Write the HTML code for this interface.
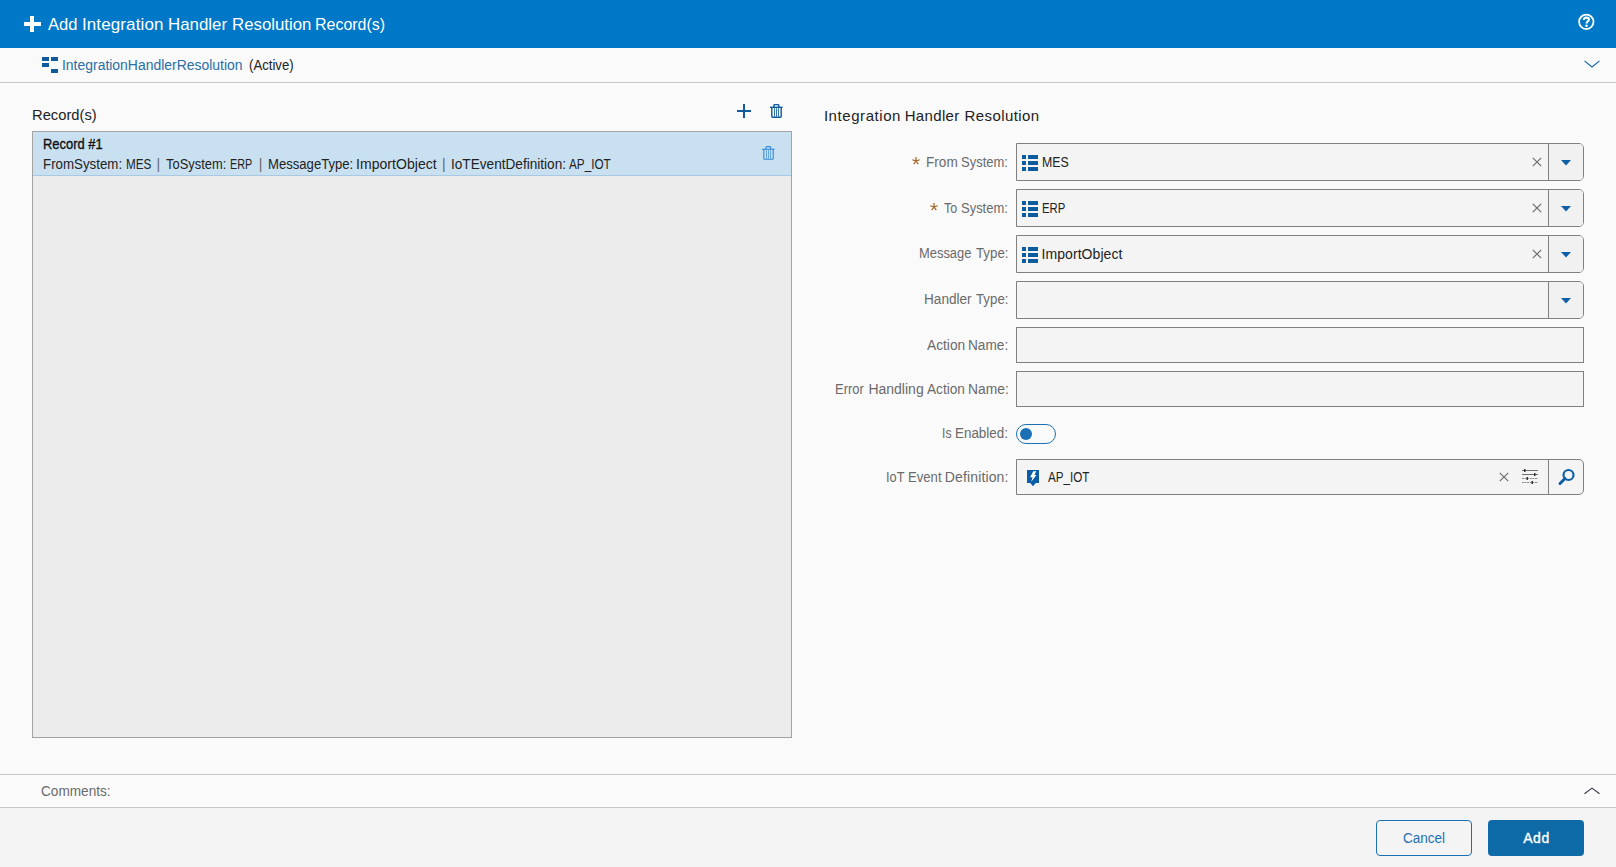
<!DOCTYPE html>
<html><head><meta charset="utf-8"><style>
html,body{margin:0;padding:0;width:1616px;height:867px;overflow:hidden;background:#fafafa;font-family:"Liberation Sans", sans-serif;}
.t{position:absolute;line-height:1;white-space:nowrap;}
</style></head><body>
<div style="position:absolute;left:0px;top:0px;width:1616px;height:48px;box-sizing:border-box;background:#0078c8"></div>
<div style="position:absolute;left:24px;top:22.3px;width:16.6px;height:3.4px;box-sizing:border-box;background:#fff"></div>
<div style="position:absolute;left:30.3px;top:16px;width:3.4px;height:16px;box-sizing:border-box;background:#fff"></div>
<div class="t" style="left:48.30px;top:16px;font-size:17px;color:#fff;font-weight:normal;letter-spacing:0.000px;transform:scaleX(0.9734);transform-origin:0 0;">Add</div>
<div class="t" style="left:81.90px;top:16px;font-size:17px;color:#fff;font-weight:normal;letter-spacing:0.122px;">Integration</div>
<div class="t" style="left:168.21px;top:16px;font-size:17px;color:#fff;font-weight:normal;letter-spacing:0.000px;transform:scaleX(0.9920);transform-origin:0 0;">Handler</div>
<div class="t" style="left:231.81px;top:16px;font-size:17px;color:#fff;font-weight:normal;letter-spacing:0.000px;transform:scaleX(0.9889);transform-origin:0 0;">Resolution</div>
<div class="t" style="left:315.36px;top:16px;font-size:17px;color:#fff;font-weight:normal;letter-spacing:0.000px;transform:scaleX(0.9388);transform-origin:0 0;">Record(s)</div>
<svg style="position:absolute;left:1577px;top:13px" width="18" height="18" viewBox="0 0 18 18"><circle cx="9.3" cy="8.85" r="7.2" fill="none" stroke="#fff" stroke-width="1.8"/><path d="M6.8 6.9 C6.8 5.4 7.9 4.7 9.3 4.7 C10.8 4.7 11.9 5.5 11.9 6.7 C11.9 8.2 9.6 8.4 9.6 10.4" fill="none" stroke="#fff" stroke-width="2.2"/><circle cx="9.5" cy="12.8" r="1.35" fill="#fff"/></svg>
<div style="position:absolute;left:0px;top:82px;width:1616px;height:1px;box-sizing:border-box;background:#c8c8c8"></div>
<svg style="position:absolute;left:42px;top:57px" width="16" height="16" viewBox="0 0 16 16"><rect x="0" y="0" width="7" height="4" fill="#0e5a9c"/><rect x="9" y="0" width="7" height="4" fill="#0e5a9c"/><rect x="0" y="6" width="7" height="4" fill="#0e5a9c"/><rect x="9" y="12" width="7" height="4" fill="#0e5a9c"/></svg>
<div class="t" style="left:61.70px;top:58px;font-size:14px;color:#2a6ea6;font-weight:normal;letter-spacing:0.000px;transform:scaleX(0.9953);transform-origin:0 0;">IntegrationHandlerResolution</div>
<div class="t" style="left:249.00px;top:58px;font-size:14px;color:#222;font-weight:normal;letter-spacing:0.000px;transform:scaleX(0.9404);transform-origin:0 0;">(Active)</div>
<svg style="position:absolute;left:1584px;top:60px" width="16" height="9" viewBox="0 0 16 9"><path d="M0.5 0.9 L8 6.9 L15.5 0.9" fill="none" stroke="#1260a6" stroke-width="1.15"/></svg>
<div class="t" style="left:32.02px;top:107px;font-size:15px;color:#222;font-weight:normal;letter-spacing:0.000px;transform:scaleX(0.9838);transform-origin:0 0;">Record(s)</div>
<div style="position:absolute;left:737px;top:110px;width:14px;height:2px;box-sizing:border-box;background:#0e5a9c"></div>
<div style="position:absolute;left:743px;top:104px;width:2px;height:14px;box-sizing:border-box;background:#0e5a9c"></div>
<svg style="position:absolute;left:770px;top:104px" width="13" height="14" viewBox="0 0 13 14"><g fill="none" stroke="#0e5a9c" stroke-width="1.4"><path d="M0 3.3 H12.6"/><path d="M3.9 3.1 V1.6 Q3.9 0.6 4.9 0.6 H7.8 Q8.8 0.6 8.8 1.6 V3.1"/><path d="M1.8 3.6 V12.6 Q1.8 13.3 2.5 13.3 H10.5 Q11.2 13.3 11.2 12.6 V3.6"/></g><path d="M4.5 4.2 V12.6 M6.5 4.2 V12.6 M8.5 4.2 V12.6" stroke="#0e5a9c" stroke-width="0.84"/></svg>
<div style="position:absolute;left:32px;top:131px;width:760px;height:607px;box-sizing:border-box;background:#ececec;border:1px solid #a3a3a3"></div>
<div style="position:absolute;left:33px;top:132px;width:758px;height:44px;box-sizing:border-box;background:#c9e0f1;border-bottom:1px solid #a9c9e2"></div>
<div class="t" style="left:42.98px;top:137px;font-size:14px;color:#111;font-weight:normal;letter-spacing:0.000px;transform:scaleX(0.9231);transform-origin:0 0;-webkit-text-stroke:0.35px #111;">Record #1</div>
<div class="t" style="left:42.75px;top:157px;font-size:14px;color:#222;font-weight:normal;letter-spacing:0.000px;transform:scaleX(0.9504);transform-origin:0 0;">FromSystem:</div>
<div class="t" style="left:125.77px;top:157px;font-size:14px;color:#222;font-weight:normal;letter-spacing:0.000px;transform:scaleX(0.8345);transform-origin:0 0;">MES</div>
<div class="t" style="left:156.60px;top:157px;font-size:14px;color:#666;font-weight:normal;letter-spacing:0.000px;">|</div>
<div class="t" style="left:166.20px;top:157px;font-size:14px;color:#222;font-weight:normal;letter-spacing:0.000px;transform:scaleX(0.9215);transform-origin:0 0;">ToSystem:</div>
<div class="t" style="left:230.43px;top:157px;font-size:14px;color:#222;font-weight:normal;letter-spacing:0.000px;transform:scaleX(0.7724);transform-origin:0 0;">ERP</div>
<div class="t" style="left:258.80px;top:157px;font-size:14px;color:#666;font-weight:normal;letter-spacing:0.000px;">|</div>
<div class="t" style="left:267.56px;top:157px;font-size:14px;color:#222;font-weight:normal;letter-spacing:0.000px;transform:scaleX(0.9365);transform-origin:0 0;">MessageType:</div>
<div class="t" style="left:356.00px;top:157px;font-size:14px;color:#222;font-weight:normal;letter-spacing:0.050px;">ImportObject</div>
<div class="t" style="left:442.00px;top:157px;font-size:14px;color:#666;font-weight:normal;letter-spacing:0.000px;">|</div>
<div class="t" style="left:450.83px;top:157px;font-size:14px;color:#222;font-weight:normal;letter-spacing:0.000px;transform:scaleX(0.9726);transform-origin:0 0;">IoTEventDefinition:</div>
<div class="t" style="left:569.30px;top:157px;font-size:14px;color:#222;font-weight:normal;letter-spacing:0.000px;transform:scaleX(0.8380);transform-origin:0 0;">AP_IOT</div>
<svg style="position:absolute;left:761.8px;top:145.8px" width="13" height="14" viewBox="0 0 13 14"><g fill="none" stroke="#3088d6" stroke-width="1.1"><path d="M0 3.3 H12.6"/><path d="M3.9 3.1 V1.6 Q3.9 0.6 4.9 0.6 H7.8 Q8.8 0.6 8.8 1.6 V3.1"/><path d="M1.8 3.6 V12.6 Q1.8 13.3 2.5 13.3 H10.5 Q11.2 13.3 11.2 12.6 V3.6"/></g><path d="M4.5 4.2 V12.6 M6.5 4.2 V12.6 M8.5 4.2 V12.6" stroke="#3088d6" stroke-width="0.66"/></svg>
<div class="t" style="left:823.90px;top:108px;font-size:15px;color:#222;font-weight:normal;letter-spacing:0.566px;">Integration</div>
<div class="t" style="left:904.70px;top:108px;font-size:15px;color:#222;font-weight:normal;letter-spacing:0.344px;">Handler</div>
<div class="t" style="left:964.50px;top:108px;font-size:15px;color:#222;font-weight:normal;letter-spacing:0.407px;">Resolution</div>
<div class="t" style="left:925.53px;top:155px;font-size:14px;color:#6a6a6a;font-weight:normal;letter-spacing:0.000px;transform:scaleX(0.9710);transform-origin:0 0;">From</div>
<div class="t" style="left:961.20px;top:155px;font-size:14px;color:#6a6a6a;font-weight:normal;letter-spacing:0.000px;transform:scaleX(0.9280);transform-origin:0 0;">System:</div>
<div style="position:absolute;left:1016px;top:143px;width:568px;height:38px;box-sizing:border-box;background:#f4f4f4;border:1px solid #808080;border-radius:0 5px 5px 0"></div>
<div style="position:absolute;left:1548px;top:143px;width:1px;height:38px;box-sizing:border-box;background:#808080"></div>
<div style="position:absolute;left:1549px;top:144px;width:34px;height:36px;box-sizing:border-box;background:#f1f1f1;border-radius:0 4px 4px 0"></div>
<svg style="position:absolute;left:1561px;top:160px" width="10" height="6" viewBox="0 0 10 6"><path d="M0 0 H10 L5 5.5 Z" fill="#0e5fa8"/></svg>
<svg style="position:absolute;left:1531.5px;top:157.4px" width="10" height="10" viewBox="0 0 10 10"><path d="M0.8 0.8 L9.2 9.2 M9.2 0.8 L0.8 9.2" stroke="#6a6a6a" stroke-width="1.15"/></svg>
<svg style="position:absolute;left:1022px;top:155px" width="16" height="16" viewBox="0 0 16 16"><g fill="#0a5c9f"><rect x="0" y="0" width="4" height="4"/><rect x="6" y="0" width="10" height="4"/><rect x="0" y="6" width="4" height="4"/><rect x="6" y="6" width="10" height="4"/><rect x="0" y="12" width="4" height="4"/><rect x="6" y="12" width="10" height="4"/></g></svg>
<div class="t" style="left:1041.82px;top:155px;font-size:14px;color:#222;font-weight:normal;letter-spacing:0.000px;transform:scaleX(0.8793);transform-origin:0 0;">MES</div>
<div class="t" style="left:943.60px;top:201px;font-size:14px;color:#6a6a6a;font-weight:normal;letter-spacing:0.000px;transform:scaleX(0.8933);transform-origin:0 0;">To</div>
<div class="t" style="left:961.40px;top:201px;font-size:14px;color:#6a6a6a;font-weight:normal;letter-spacing:0.000px;transform:scaleX(0.9260);transform-origin:0 0;">System:</div>
<div style="position:absolute;left:1016px;top:189px;width:568px;height:38px;box-sizing:border-box;background:#f4f4f4;border:1px solid #808080;border-radius:0 5px 5px 0"></div>
<div style="position:absolute;left:1548px;top:189px;width:1px;height:38px;box-sizing:border-box;background:#808080"></div>
<div style="position:absolute;left:1549px;top:190px;width:34px;height:36px;box-sizing:border-box;background:#f1f1f1;border-radius:0 4px 4px 0"></div>
<svg style="position:absolute;left:1561px;top:206px" width="10" height="6" viewBox="0 0 10 6"><path d="M0 0 H10 L5 5.5 Z" fill="#0e5fa8"/></svg>
<svg style="position:absolute;left:1531.5px;top:203.4px" width="10" height="10" viewBox="0 0 10 10"><path d="M0.8 0.8 L9.2 9.2 M9.2 0.8 L0.8 9.2" stroke="#6a6a6a" stroke-width="1.15"/></svg>
<svg style="position:absolute;left:1022px;top:201px" width="16" height="16" viewBox="0 0 16 16"><g fill="#0a5c9f"><rect x="0" y="0" width="4" height="4"/><rect x="6" y="0" width="10" height="4"/><rect x="0" y="6" width="4" height="4"/><rect x="6" y="6" width="10" height="4"/><rect x="0" y="12" width="4" height="4"/><rect x="6" y="12" width="10" height="4"/></g></svg>
<div class="t" style="left:1041.79px;top:201px;font-size:14px;color:#222;font-weight:normal;letter-spacing:0.000px;transform:scaleX(0.8088);transform-origin:0 0;">ERP</div>
<div class="t" style="left:919.08px;top:246px;font-size:14px;color:#6a6a6a;font-weight:normal;letter-spacing:0.000px;transform:scaleX(0.9229);transform-origin:0 0;">Message</div>
<div class="t" style="left:975.70px;top:246px;font-size:14px;color:#6a6a6a;font-weight:normal;letter-spacing:0.000px;transform:scaleX(0.9475);transform-origin:0 0;">Type:</div>
<div style="position:absolute;left:1016px;top:235px;width:568px;height:38px;box-sizing:border-box;background:#f4f4f4;border:1px solid #808080;border-radius:0 5px 5px 0"></div>
<div style="position:absolute;left:1548px;top:235px;width:1px;height:38px;box-sizing:border-box;background:#808080"></div>
<div style="position:absolute;left:1549px;top:236px;width:34px;height:36px;box-sizing:border-box;background:#f1f1f1;border-radius:0 4px 4px 0"></div>
<svg style="position:absolute;left:1561px;top:252px" width="10" height="6" viewBox="0 0 10 6"><path d="M0 0 H10 L5 5.5 Z" fill="#0e5fa8"/></svg>
<svg style="position:absolute;left:1531.5px;top:249.4px" width="10" height="10" viewBox="0 0 10 10"><path d="M0.8 0.8 L9.2 9.2 M9.2 0.8 L0.8 9.2" stroke="#6a6a6a" stroke-width="1.15"/></svg>
<svg style="position:absolute;left:1022px;top:247px" width="16" height="16" viewBox="0 0 16 16"><g fill="#0a5c9f"><rect x="0" y="0" width="4" height="4"/><rect x="6" y="0" width="10" height="4"/><rect x="0" y="6" width="4" height="4"/><rect x="6" y="6" width="10" height="4"/><rect x="0" y="12" width="4" height="4"/><rect x="6" y="12" width="10" height="4"/></g></svg>
<div class="t" style="left:1041.60px;top:247px;font-size:14px;color:#222;font-weight:normal;letter-spacing:0.059px;">ImportObject</div>
<div class="t" style="left:923.73px;top:292px;font-size:14px;color:#6a6a6a;font-weight:normal;letter-spacing:0.000px;transform:scaleX(0.9718);transform-origin:0 0;">Handler</div>
<div class="t" style="left:975.70px;top:292px;font-size:14px;color:#6a6a6a;font-weight:normal;letter-spacing:0.000px;transform:scaleX(0.9475);transform-origin:0 0;">Type:</div>
<div style="position:absolute;left:1016px;top:281px;width:568px;height:38px;box-sizing:border-box;background:#f4f4f4;border:1px solid #808080;border-radius:0 5px 5px 0"></div>
<div style="position:absolute;left:1548px;top:281px;width:1px;height:38px;box-sizing:border-box;background:#808080"></div>
<div style="position:absolute;left:1549px;top:282px;width:34px;height:36px;box-sizing:border-box;background:#f1f1f1;border-radius:0 4px 4px 0"></div>
<svg style="position:absolute;left:1561px;top:298px" width="10" height="6" viewBox="0 0 10 6"><path d="M0 0 H10 L5 5.5 Z" fill="#0e5fa8"/></svg>
<div class="t" style="left:926.90px;top:338px;font-size:14px;color:#6a6a6a;font-weight:normal;letter-spacing:0.000px;transform:scaleX(0.9810);transform-origin:0 0;">Action</div>
<div class="t" style="left:967.92px;top:338px;font-size:14px;color:#6a6a6a;font-weight:normal;letter-spacing:0.000px;transform:scaleX(0.9760);transform-origin:0 0;">Name:</div>
<div style="position:absolute;left:1016px;top:327px;width:568px;height:36px;box-sizing:border-box;background:#f4f4f4;border:1px solid #808080"></div>
<div class="t" style="left:834.67px;top:382px;font-size:14px;color:#6a6a6a;font-weight:normal;letter-spacing:0.000px;transform:scaleX(0.9262);transform-origin:0 0;">Error</div>
<div class="t" style="left:868.40px;top:382px;font-size:14px;color:#6a6a6a;font-weight:normal;letter-spacing:0.003px;">Handling</div>
<div class="t" style="left:926.80px;top:382px;font-size:14px;color:#6a6a6a;font-weight:normal;letter-spacing:0.000px;transform:scaleX(0.9758);transform-origin:0 0;">Action</div>
<div class="t" style="left:967.51px;top:382px;font-size:14px;color:#6a6a6a;font-weight:normal;letter-spacing:0.000px;transform:scaleX(0.9887);transform-origin:0 0;">Name:</div>
<div style="position:absolute;left:1016px;top:371px;width:568px;height:36px;box-sizing:border-box;background:#f4f4f4;border:1px solid #808080"></div>
<svg style="position:absolute;left:910.7px;top:156px" width="10" height="10" viewBox="0 0 10 10"><path d="M5 5 L5.00 1.10 M5 5 L8.71 3.79 M5 5 L7.29 8.16 M5 5 L2.71 8.16 M5 5 L1.29 3.79" stroke="#a0601c" stroke-width="1.2" stroke-linecap="butt" fill="none"/></svg>
<svg style="position:absolute;left:928.5px;top:202px" width="10" height="10" viewBox="0 0 10 10"><path d="M5 5 L5.00 1.10 M5 5 L8.71 3.79 M5 5 L7.29 8.16 M5 5 L2.71 8.16 M5 5 L1.29 3.79" stroke="#a0601c" stroke-width="1.2" stroke-linecap="butt" fill="none"/></svg>
<div class="t" style="left:942.43px;top:426px;font-size:14px;color:#6a6a6a;font-weight:normal;letter-spacing:0.000px;transform:scaleX(0.8696);transform-origin:0 0;">Is</div>
<div class="t" style="left:955.44px;top:426px;font-size:14px;color:#6a6a6a;font-weight:normal;letter-spacing:0.000px;transform:scaleX(0.9573);transform-origin:0 0;">Enabled:</div>
<div style="position:absolute;left:1016px;top:424px;width:40px;height:20px;box-sizing:border-box;border:1.6px solid #1a70b4;border-radius:10px"></div>
<div style="position:absolute;left:1020px;top:428px;width:12px;height:12px;box-sizing:border-box;background:#1a70b4;border-radius:50%"></div>
<div class="t" style="left:885.59px;top:470px;font-size:14px;color:#6a6a6a;font-weight:normal;letter-spacing:0.000px;transform:scaleX(0.9148);transform-origin:0 0;">IoT</div>
<div class="t" style="left:907.66px;top:470px;font-size:14px;color:#6a6a6a;font-weight:normal;letter-spacing:0.000px;transform:scaleX(0.9367);transform-origin:0 0;">Event</div>
<div class="t" style="left:944.80px;top:470px;font-size:14px;color:#6a6a6a;font-weight:normal;letter-spacing:0.133px;">Definition:</div>
<div style="position:absolute;left:1016px;top:459px;width:568px;height:36px;box-sizing:border-box;background:#f4f4f4;border:1px solid #808080;border-radius:0 5px 5px 0"></div>
<div style="position:absolute;left:1548px;top:459px;width:1px;height:36px;box-sizing:border-box;background:#808080"></div>
<svg style="position:absolute;left:1027px;top:470px" width="12" height="17" viewBox="0 0 12 17"><path d="M0 0 H12 V12.9 H8.8 L6 16.2 L3.2 12.9 H0 Z" fill="#0b5ea6"/><path d="M6.3 1.3 L9.3 1.3 L7.4 5 L9.4 5 L4.3 11.8 L5.5 7.2 L3.1 7.2 Z" fill="#fff"/></svg>
<div class="t" style="left:1048.20px;top:470px;font-size:14px;color:#222;font-weight:normal;letter-spacing:0.000px;transform:scaleX(0.8300);transform-origin:0 0;">AP_IOT</div>
<svg style="position:absolute;left:1498.6px;top:471.5px" width="10" height="10" viewBox="0 0 10 10"><path d="M0.8 0.8 L9.2 9.2 M9.2 0.8 L0.8 9.2" stroke="#6a6a6a" stroke-width="1.15"/></svg>
<svg style="position:absolute;left:1522px;top:469px" width="16" height="15" viewBox="0 0 16 15"><g stroke="#6e6e6e" stroke-width="1"><path d="M0 1.5 H16 M0 5.5 H16"/><path d="M0 9.5 H16 M0 13.5 H16" stroke="#8c8c8c" stroke-dasharray="2 0.6"/></g><g fill="#333"><rect x="2" y="0" width="1.5" height="3"/><rect x="12" y="4" width="1.5" height="3"/><rect x="4.5" y="8" width="1.5" height="3"/><rect x="9.5" y="12" width="1.5" height="3"/></g></svg>
<svg style="position:absolute;left:1557px;top:468px" width="18" height="18" viewBox="0 0 18 18"><circle cx="11.5" cy="7" r="5" fill="none" stroke="#0e5fa8" stroke-width="2.2"/><path d="M8 10.5 L3 15.5" stroke="#0e5fa8" stroke-width="3" stroke-linecap="round"/></svg>
<div style="position:absolute;left:0px;top:774px;width:1616px;height:1px;box-sizing:border-box;background:#c8c8c8"></div>
<div class="t" style="left:40.60px;top:784px;font-size:14px;color:#6a6a6a;font-weight:normal;letter-spacing:0.000px;transform:scaleX(0.9720);transform-origin:0 0;">Comments:</div>
<svg style="position:absolute;left:1584px;top:786px" width="16" height="9" viewBox="0 0 16 9"><path d="M0.5 7.8 L8 2.1 L15.5 7.8" fill="none" stroke="#343f4c" stroke-width="1.15"/></svg>
<div style="position:absolute;left:0px;top:807px;width:1616px;height:1px;box-sizing:border-box;background:#c8c8c8"></div>
<div style="position:absolute;left:0px;top:808px;width:1616px;height:59px;box-sizing:border-box;background:#f4f4f4"></div>
<div style="position:absolute;left:1376px;top:820px;width:96px;height:36px;box-sizing:border-box;border:1.5px solid #1a70b4;border-radius:4px"></div>
<div class="t" style="left:1403.00px;top:831px;font-size:14px;color:#1a70b4;font-weight:normal;letter-spacing:0.000px;transform:scaleX(0.9662);transform-origin:0 0;">Cancel</div>
<div style="position:absolute;left:1488px;top:820px;width:96px;height:36px;box-sizing:border-box;background:#0e6aa6;border-radius:4px"></div>
<div class="t" style="left:1523.20px;top:831px;font-size:14px;color:#fff;font-weight:normal;letter-spacing:0.538px;-webkit-text-stroke:0.35px #fff;">Add</div>
</body></html>
